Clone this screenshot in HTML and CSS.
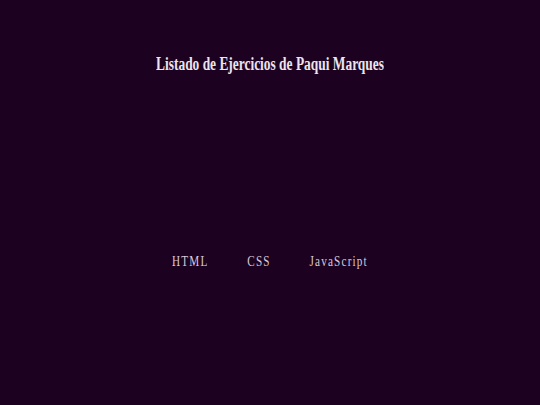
FILE: index.html
```html
<!DOCTYPE html>
<html lang="es">
<head>
<meta charset="utf-8">
<title>Listado de Ejercicios</title>
<link rel="stylesheet" href="styles.css">
</head>
<body>
<div class="page">
  <header class="header">
    <h1 class="title">Listado de Ejercicios de Paqui Marques</h1>
  </header>
  <nav class="nav">
    <a class="nav-link" href="#">HTML</a>
    <a class="nav-link" href="#">CSS</a>
    <a class="nav-link" href="#">JavaScript</a>
  </nav>
</div>
</body>
</html>
```
FILE: styles.css
```css
html, body {
  margin: 0;
  padding: 0;
}
body {
  background: #1c0220;
  width: 540px;
  height: 405px;
  overflow: hidden;
  font-family: "Liberation Serif", serif;
  color: #ece4ee;
}
.page {
  width: 540px;
  transform: scaleX(0.745);
  transform-origin: 270px 0;
}
.header {
  display: flex;
  justify-content: center;
  padding-top: 53px;
}
.title {
  margin: 0;
  font-size: 18px;
  font-weight: bold;
  line-height: 22px;
}
.nav {
  display: flex;
  justify-content: center;
  gap: 52px;
  margin-top: 178px;
}
.nav-link {
  color: #d8cadc;
  text-decoration: none;
  font-size: 15px;
  letter-spacing: 1.6px;
  line-height: 17px;
}
```
